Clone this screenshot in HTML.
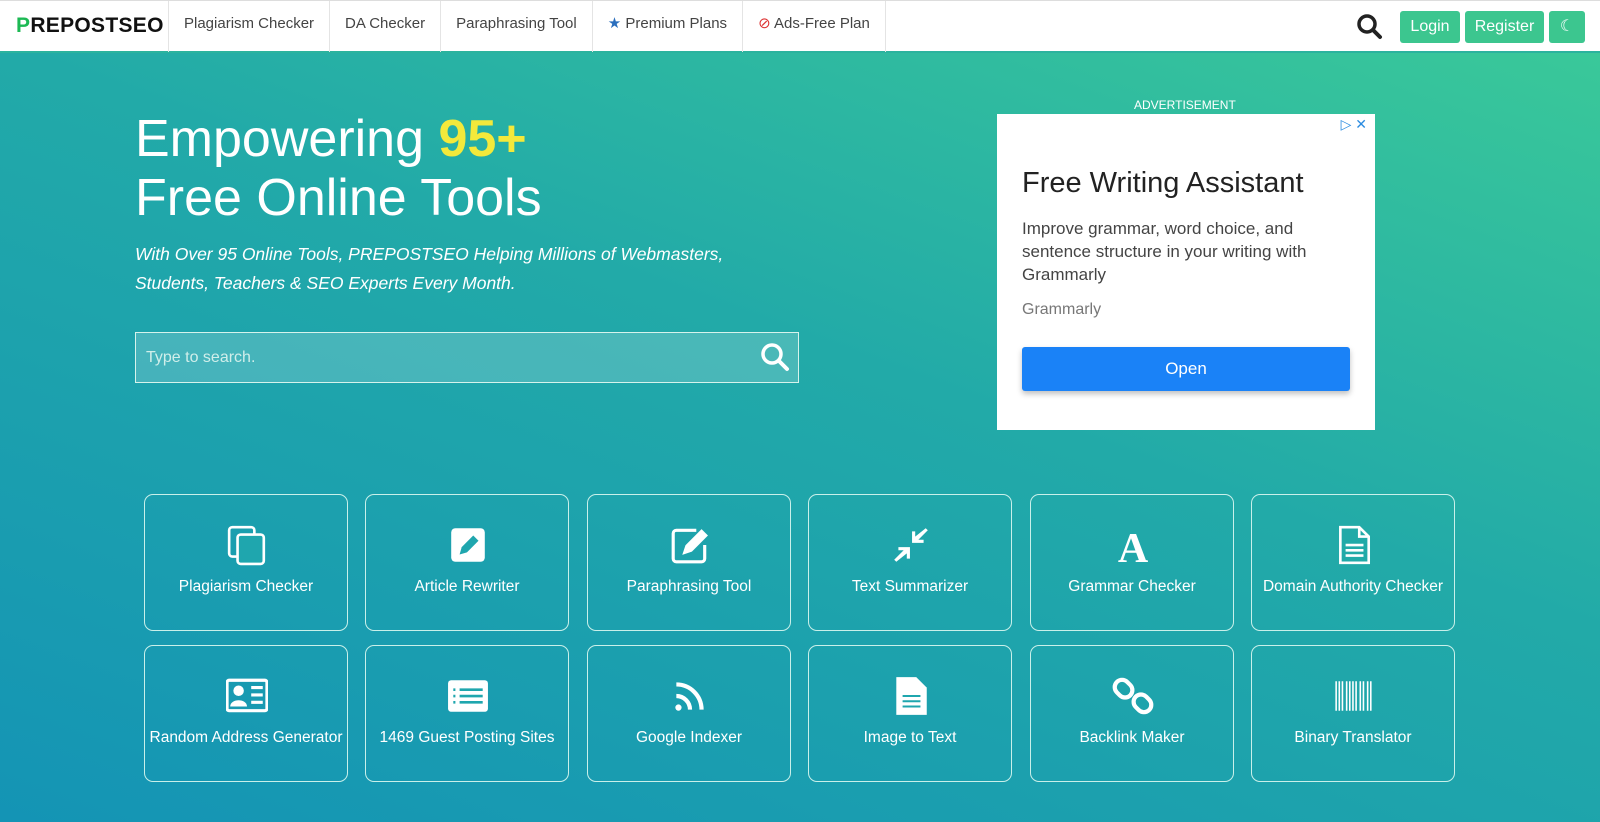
<!DOCTYPE html>
<html><head><meta charset="utf-8"><style>
*{box-sizing:border-box;margin:0;padding:0}
body{width:1600px;height:822px;overflow:hidden;font-family:"Liberation Sans",Arial,sans-serif;background:linear-gradient(200deg,#3ccb98 0%,#22aaa8 45%,#1494b5 100%);position:relative}
.hdr{position:absolute;left:0;top:0;width:1600px;height:53px;background:#fff;border-top:1px solid #ddd;border-bottom:2px solid #2bb39e}
.logo{position:absolute;left:16px;top:13px;font-weight:bold;font-size:21px;letter-spacing:0.3px;color:#111}
.logo b{color:#1db954}
.nav{position:absolute;left:168px;top:0;height:51px;display:flex}
.nav div{border-left:1px solid #e4e4e4;padding:0 15px;line-height:46px;font-size:15px;color:#444;white-space:nowrap}
.btn{position:absolute;top:10px;height:32px;background:#3cc68f;color:#fff;border-radius:3px;font-size:16px;line-height:32px;text-align:center}
h1{position:absolute;left:135px;top:110px;color:#fff;font-weight:normal;font-size:52px;line-height:59px}
h1 span{color:#f3e93b;font-weight:bold}
.sub{position:absolute;left:135px;top:240px;color:#fff;font-style:italic;font-size:17.5px;line-height:29px}
.search{position:absolute;left:135px;top:332px;width:664px;height:51px;border:1px solid #d6f3ec;background:rgba(255,255,255,.18);color:#d0eeea;font-size:16px;line-height:49px;padding-left:10px}
.adl{position:absolute;left:1134px;top:98px;color:#fff;font-size:12px}
.ad{position:absolute;left:997px;top:114px;width:378px;height:316px;background:#fff}
.card{position:absolute;width:204px;height:137px;border:1.5px solid #c9f0ea;border-radius:9px;color:#fff;text-align:center;font-size:15.5px}
.card svg{position:absolute;left:81px;top:29px;width:42px;height:42px}
.card .t{position:absolute;left:0;right:0;top:83px;white-space:nowrap}
</style></head><body>
<div class="hdr">
<div class="logo"><b>P</b>REPOSTSEO</div>
<div class="nav"><div>Plagiarism Checker</div><div>DA Checker</div><div>Paraphrasing Tool</div><div><span style="color:#2a6ebd">★</span> Premium Plans</div><div style="border-right:1px solid #e4e4e4"><span style="color:#d33">⊘</span> Ads-Free Plan</div></div>
<svg style="position:absolute;left:1356px;top:12px" width="27" height="27" viewBox="0 0 27 27"><circle cx="11" cy="11" r="8" fill="none" stroke="#222" stroke-width="3.5"/><path d="M17 17l7 7" stroke="#222" stroke-width="4" stroke-linecap="round"/></svg>
<div class="btn" style="left:1400px;width:60px">Login</div>
<div class="btn" style="left:1465px;width:79px">Register</div>
<div class="btn" style="left:1549px;width:36px">☾</div>
</div>
<h1>Empowering <span>95+</span><br>Free Online Tools</h1>
<div class="sub">With Over 95 Online Tools, PREPOSTSEO Helping Millions of Webmasters,<br>Students, Teachers &amp; SEO Experts Every Month.</div>
<div class="search">Type to search.
<svg style="position:absolute;right:8px;top:9px" width="30" height="30" viewBox="0 0 30 30"><circle cx="12" cy="12" r="9" fill="none" stroke="#fff" stroke-width="3.5"/><path d="M19 19l8 8" stroke="#fff" stroke-width="4" stroke-linecap="round"/></svg></div>
<div class="adl">ADVERTISEMENT</div>
<div class="ad">
<div style="position:absolute;right:8px;top:2px;color:#2a8be0;font-size:14px">▷ ✕</div>
<div style="position:absolute;left:25px;top:53px;font-size:29px;color:#222">Free Writing Assistant</div>
<div style="position:absolute;left:25px;top:103px;font-size:17px;line-height:23px;color:#444;width:335px">Improve grammar, word choice, and sentence structure in your writing with Grammarly</div>
<div style="position:absolute;left:25px;top:187px;font-size:16px;color:#777">Grammarly</div>
<div style="position:absolute;left:25px;top:233px;width:328px;height:44px;background:#1a82f7;border-radius:3px;color:#fff;font-size:17px;line-height:44px;text-align:center;box-shadow:0 3px 6px rgba(0,0,0,.25)">Open</div>
</div>

<div class="card" style="left:144px;top:494px"><svg viewBox="0 0 40 40" fill="none" stroke="#fff" stroke-width="2.5"><rect x="3" y="3" width="24" height="28" rx="3"/><rect x="11" y="10" width="25" height="28" rx="3" fill="#1fa6ae"/></svg><div class="t">Plagiarism Checker</div></div>
<div class="card" style="left:365px;top:494px"><svg viewBox="0 0 40 40"><rect x="4" y="4" width="32" height="32" rx="4" fill="#fff"/><path d="M12 29l2-7 11-11 5 5-11 11z" fill="#1fa6ae"/></svg><div class="t">Article Rewriter</div></div>
<div class="card" style="left:587px;top:494px"><svg viewBox="0 0 40 40" fill="none" stroke="#fff" stroke-width="3"><path d="M26 6H7a3 3 0 0 0-3 3v24a3 3 0 0 0 3 3h24a3 3 0 0 0 3-3V20"/><path d="M15 27l2-6 14-14 4 4-14 14z" fill="#fff"/></svg><div class="t">Paraphrasing Tool</div></div>
<div class="card" style="left:808px;top:494px"><svg viewBox="0 0 40 40" fill="#fff"><path d="M34 4l2 2-9 9 5 0 0 3-11 0 0-11 3 0 0 5z"/><path d="M6 36l-2-2 9-9-5 0 0-3 11 0 0 11-3 0 0-5z"/></svg><div class="t">Text Summarizer</div></div>
<div class="card" style="left:1030px;top:494px"><svg viewBox="0 0 40 40"><text x="20" y="36" fill="#fff" font-family="Liberation Serif" font-weight="bold" font-size="40" text-anchor="middle">A</text></svg><div class="t">Grammar Checker</div></div>
<div class="card" style="left:1251px;top:494px"><svg viewBox="0 0 40 40" fill="none" stroke="#fff" stroke-width="2.5"><path d="M7 3h18l9 9v25H7z"/><path d="M25 3v9h9M12 20h17M12 25h17M12 30h17"/></svg><div class="t">Domain Authority Checker</div></div>

<div class="card" style="left:144px;top:645px"><svg viewBox="0 0 40 40"><rect x="1" y="5" width="38" height="29" rx="2" fill="none" stroke="#fff" stroke-width="3"/><circle cx="12" cy="15" r="5" fill="#fff"/><path d="M4 30c0-8 16-8 16 0z" fill="#fff"/><path d="M24 12h11M24 19h11M24 26h11" stroke="#fff" stroke-width="3"/></svg><div class="t">Random Address Generator</div></div>
<div class="card" style="left:365px;top:645px"><svg viewBox="0 0 40 40"><rect x="1" y="5" width="38" height="30" rx="3" fill="#fff"/><path d="M6 14h2M12 14h22M6 20h2M12 20h22M6 26h2M12 26h22" stroke="#1fa6ae" stroke-width="2.5"/></svg><div class="t">1469 Guest Posting Sites</div></div>
<div class="card" style="left:587px;top:645px"><svg viewBox="0 0 40 40" fill="none" stroke="#fff" stroke-width="4"><circle cx="9" cy="31" r="3" fill="#fff" stroke="none"/><path d="M7 20a13 13 0 0 1 13 13M7 9a24 24 0 0 1 24 24"/></svg><div class="t">Google Indexer</div></div>
<div class="card" style="left:808px;top:645px"><svg viewBox="0 0 40 40"><path d="M6 2h19l10 10v26H6z" fill="#fff"/><path d="M12 20h17M12 25h17M12 30h17" stroke="#1fa6ae" stroke-width="2"/></svg><div class="t">Image to Text</div></div>
<div class="card" style="left:1030px;top:645px"><svg viewBox="0 0 40 40" fill="none" stroke="#fff" stroke-width="4"><rect x="4" y="4" width="14" height="18" rx="7" transform="rotate(-45 11 13)"/><rect x="22" y="18" width="14" height="18" rx="7" transform="rotate(-45 29 27)"/></svg><div class="t">Backlink Maker</div></div>
<div class="card" style="left:1251px;top:645px"><svg viewBox="0 0 40 40" stroke="#fff"><path d="M3 6v28M6 6v28M9 6v28M13 6v28M16 6v28M19 6v28M22 6v28M26 6v28M29 6v28M33 6v28M36 6v28" stroke-width="1.5"/></svg><div class="t">Binary Translator</div></div>
</body></html>
